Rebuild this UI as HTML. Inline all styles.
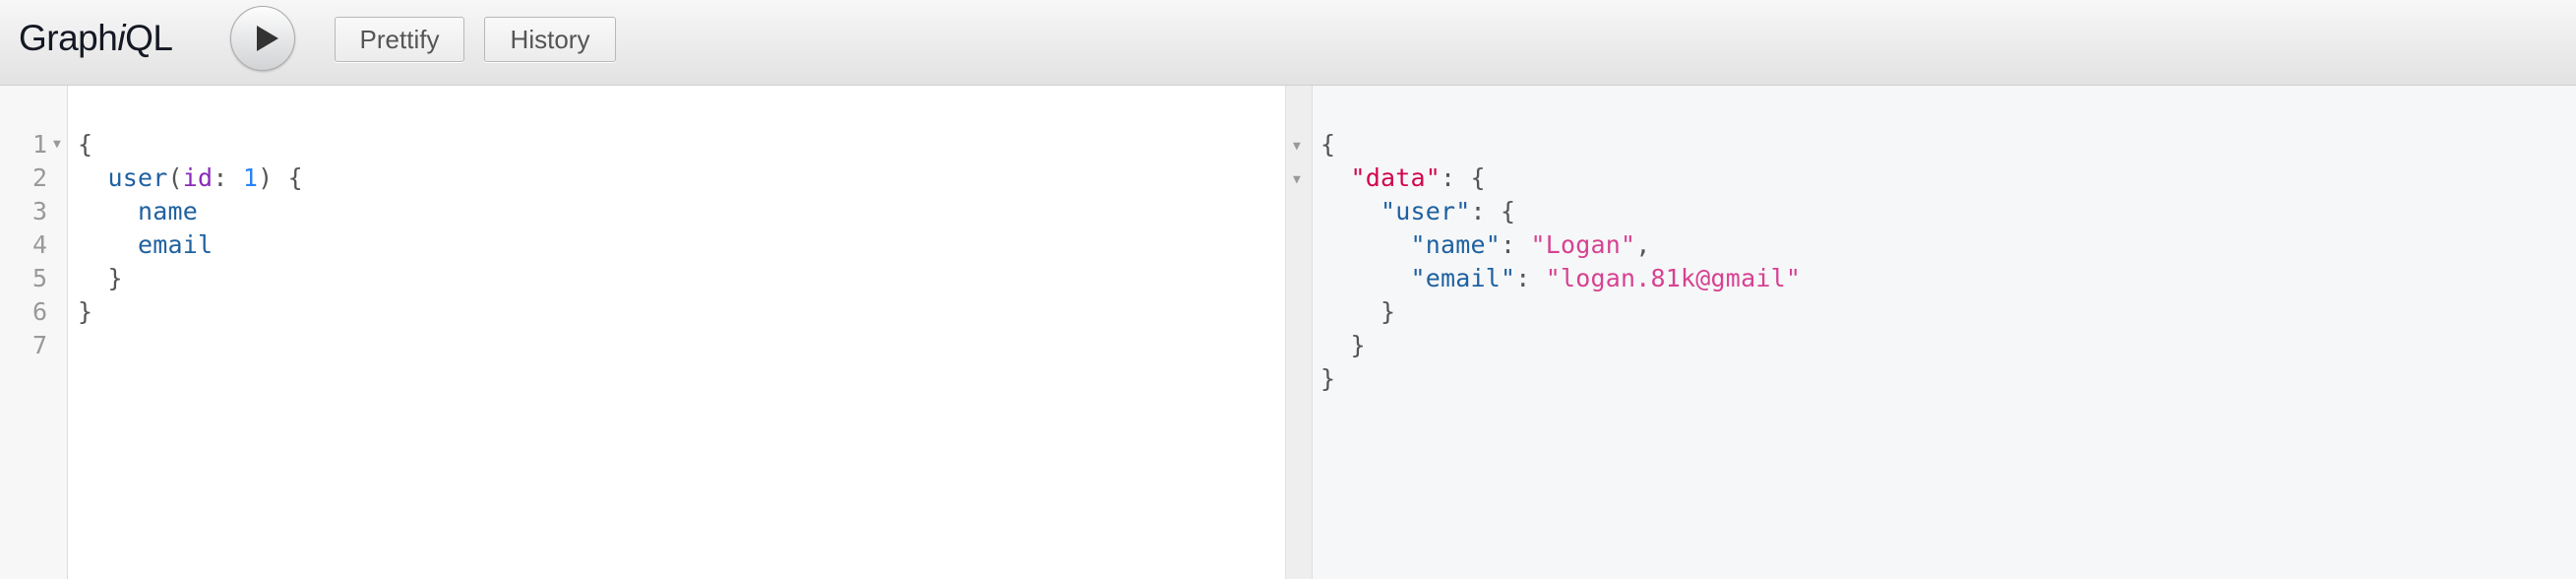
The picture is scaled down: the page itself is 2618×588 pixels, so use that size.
<!DOCTYPE html>
<html><head><style>
body{margin:0;width:2618px;height:588px;overflow:hidden;font-family:"Liberation Sans",sans-serif;background:#fff;position:relative}
.top{position:absolute;left:0;top:0;width:2618px;height:86px;background:linear-gradient(#f7f7f7,#e2e2e2);border-bottom:1px solid #d0d0d0}
.logo{position:absolute;left:19px;top:18px;font-size:37px;color:#141823;letter-spacing:-0.5px}
.play{position:absolute;border-radius:50%;border:1px solid #aaa;background:linear-gradient(#fdfdfd,#d2d3d6);box-shadow:0 1px 2px rgba(0,0,0,.2);width:66px;height:66px;box-sizing:border-box;left:234px;top:6px}
.tri{position:absolute;left:26px;top:19px;width:0;height:0;border-left:22px solid #333;border-top:13px solid transparent;border-bottom:13px solid transparent}
.btn{position:absolute;top:17px;height:46px;box-sizing:border-box;border:1px solid #b8b8b8;border-radius:3px;background:linear-gradient(#f9f9f9,#ececec);font-size:26px;color:#555;text-align:center;line-height:44px;box-shadow:0 1px 0 #fff}
.ed{position:absolute;left:0;top:87px;width:1306px;height:501px;background:#fff}
.gut{position:absolute;left:0;top:87px;width:68px;height:501px;background:#f7f7f7;border-right:1px solid #ddd}
.res{position:absolute;left:1306px;top:87px;width:1312px;height:501px;background:#f6f7f8;border-left:1px solid #e0e0e0}
.rgut{position:absolute;left:1306px;top:87px;width:26px;height:501px;background:#eeeeee;border-right:1px solid #ddd;border-left:1px solid #e0e0e0}
pre{margin:0;position:absolute;font-family:"DejaVu Sans Mono","Liberation Mono",monospace;font-size:25px;line-height:34px;color:#555}
.ln{color:#999;text-align:right;width:48px;left:0}
.ar{color:#999;font-size:13px}
.b{color:#1f61a0}.p{color:#8b2bb9}.n{color:#2882f9}.r{color:#d2054e}.s{color:#d64292}
</style></head><body>
<div class="top">
<div class="logo">Graph<i>i</i>QL</div>
<div class="play"><div class="tri"></div></div>
<div class="btn" style="left:340px;width:132px">Prettify</div>
<div class="btn" style="left:492px;width:134px">History</div>
</div>
<div class="ed"></div><div class="gut"></div>
<pre class="ln" style="top:130px">1
2
3
4
5
6
7</pre>
<pre class="ar" style="left:54px;top:130px;line-height:34px">▼</pre>
<pre style="left:79px;top:130px;letter-spacing:0.2px">{
  <span class="b">user</span>(<span class="p">id</span>: <span class="n">1</span>) {
    <span class="b">name</span>
    <span class="b">email</span>
  }
}</pre>
<div class="res"></div><div class="rgut"></div>
<pre class="ar" style="left:1314px;top:132px;line-height:34px">▼
▼</pre>
<pre style="left:1342px;top:130px;letter-spacing:0.2px">{
  <span class="r">"data"</span>: {
    <span class="b">"user"</span>: {
      <span class="b">"name"</span>: <span class="s">"Logan"</span>,
      <span class="b">"email"</span>: <span class="s">"logan.81k@gmail"</span>
    }
  }
}</pre>
</body></html>
